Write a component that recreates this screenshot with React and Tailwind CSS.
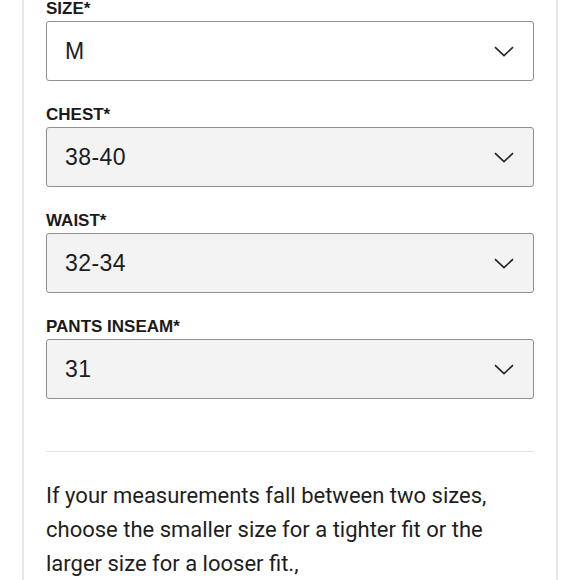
const fields = [
  { label: 'SIZE*', value: 'M', filled: false },
  { label: 'CHEST*', value: '38-40', filled: true },
  { label: 'WAIST*', value: '32-34', filled: true },
  { label: 'PANTS INSEAM*', value: '31', filled: true },
]

function Chevron() {
  return (
    <svg width="20" height="11" viewBox="0 0 20 11" fill="none" className="shrink-0">
      <path d="M1 1.2 L10 9.6 L19 1.2" stroke="#222" strokeWidth="1.6" strokeLinejoin="miter" />
    </svg>
  )
}

function SelectField({ label, value, filled }) {
  return (
    <div className="mb-[25px]">
      <p className="text-[17px] leading-[18px] font-bold text-[#1a1a1a] mb-[3px] font-['Liberation_Sans',Arial,sans-serif]">
        {label}
      </p>
      <div
        className={`h-[60px] flex items-center justify-between pl-[18px] pr-[19px] border-[1.5px] border-[#8f8f8f] rounded-[3px] ${
          filled ? 'bg-[#f3f3f3]' : 'bg-white'
        }`}
      >
        <span className="text-[23px] tracking-[0.02em] text-[#1c1c1c] font-['Liberation_Sans',Arial,sans-serif]">{value}</span>
        <Chevron />
      </div>
    </div>
  )
}

export default function App() {
  return (
    <div className="w-[580px] h-[580px] overflow-hidden bg-white">
      <div className="mx-[22px] h-full border-x-2 border-[#e8e8e8] px-[22px]">
        <div>
          {fields.map((f) => (
            <SelectField key={f.label} {...f} />
          ))}
        </div>
        <div className="mt-[52px] border-t-[1.5px] border-[#e3e3e3]" />
        <p className="mt-[27px] text-[22px] leading-[34px] text-[#1e1e1e] font-['Roboto',sans-serif]">
          If your measurements fall between two sizes, choose the smaller size for a tighter fit or the larger size for a looser fit.,
        </p>
      </div>
    </div>
  )
}
